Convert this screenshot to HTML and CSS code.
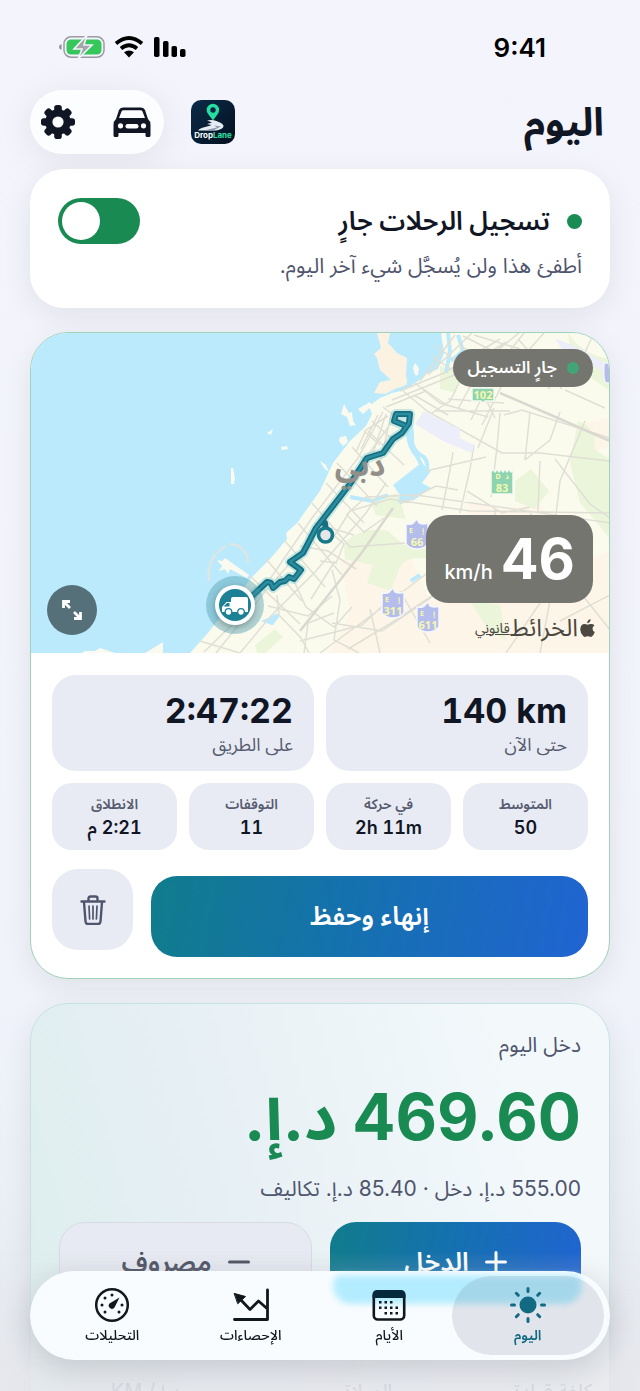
FILE: index.html
```html
<!DOCTYPE html>
<html lang="ar" dir="rtl">
<head>
<meta charset="utf-8">
<meta name="viewport" content="width=device-width, initial-scale=1">
<title>اليوم</title>
<link rel="stylesheet" href="styles.css">
</head>
<body>
<div class="status-bar">
  <span class="clock">9:41</span>
  <span class="indicators">
    <svg width="34" height="22" viewBox="0 0 34 22" aria-hidden="true"><rect x="1" y="1" width="5.500" height="20" rx="1.800"/><rect x="10" y="5" width="5.500" height="16" rx="1.800"/><rect x="18.500" y="10" width="5.500" height="11" rx="1.800"/><rect x="27" y="13" width="5.500" height="8" rx="1.800"/></svg>
    <svg width="30" height="22" viewBox="0 0 30 22" aria-hidden="true"><path d="M2 7.500Q15-3.500 28 7.500M7 12.500q8-6.500 16 0" fill="none" stroke="#000" stroke-width="3.800"/><path d="M10 16.200q5-3.600 10 0L15 21.500z"/></svg>
    <svg width="46" height="24" viewBox="0 0 46 24" aria-hidden="true"><rect x="5" y="1.800" width="40" height="20.400" rx="7" fill="none" stroke="#9b9ca1" stroke-width="1.500"/><path d="M2.500 9v6Q0 14 0 12t2.500-3z" fill="#8c8d92"/><rect x="7.500" y="4.500" width="35" height="15" rx="4.500" fill="#35c759"/><path d="M28 0 15 14h8l-4 10 14-14h-8z" fill="#a5a6aa" stroke="#f2f3fb" stroke-width="1.600"/></svg>
  </span>
</div>

<header class="top">
  <h1>اليوم</h1>
  <div class="tools">
    <svg class="logo" viewBox="0 0 44 44" role="img" aria-label="DropLane">
      <defs><linearGradient id="lg" x1="0" y1="0" x2="1" y2="1"><stop stop-color="#0b2b49"/><stop offset="1" stop-color="#04101f"/></linearGradient></defs>
      <rect width="44" height="44" rx="10" fill="url(#lg)"/>
      <path d="M22 20.500C18 15 15.700 13 15.700 10a6.200 6.200 0 0 1 12.400 0c0 3-2.200 5-6.100 10.500z" fill="#25dfa0"/>
      <circle cx="22" cy="10" r="2.700" fill="#0a2340"/>
      <path d="M16 20.500c6-1.500 10 .5 14 2.500 5 3 2 6.500-5 7.500H7c3-3.500 9-3.500 13.500-5.500L16 24l5-1.500z" fill="#e8edf5"/>
      <path d="M13 30.500l13-3-3-2 7 1-8 4z" fill="#8998ad"/>
      <text x="22" y="37.500" text-anchor="middle" direction="ltr" class="logo-text"><tspan fill="#fff">Drop</tspan><tspan fill="#2be0a3">Lane</tspan></text>
    </svg>
    <div class="tool-pill">
      <button type="button" aria-label="المركبة"><svg width="38" height="30" viewBox="0 0 38 30" aria-hidden="true"><path d="M3 12 6 3Q7 .5 10 .5h18q3 0 4 2.500l3 9q2.500 2 2.500 6v10.500q0 1.500-1.500 1.500H34q-1.500 0-1.500-1.500V26h-27v2.500Q5.500 30 4 30H2Q.5 30 .5 28.500V18q0-4 2.500-6z" fill="#111625"/><path d="m6 11 2.500-6.500q.5-1.300 2-1.300h17q1.500 0 2 1.300L32 11z" fill="#fbfdff"/><rect x="12.500" y="17" width="13" height="4.400" rx="2.200" fill="#fbfdff"/><circle cx="7.500" cy="18.800" r="2.600" fill="#fbfdff"/><circle cx="30.500" cy="18.800" r="2.600" fill="#fbfdff"/></svg></button>
      <button type="button" aria-label="الإعدادات"><svg width="36" height="36" viewBox="-18 -18 36 36" aria-hidden="true"><g fill="#111625"><g id="teeth"><rect x="-3.800" y="-17" width="7.600" height="34" rx="2.800"/><rect x="-17" y="-3.800" width="34" height="7.600" rx="2.800"/></g><use href="#teeth" transform="rotate(45)"/><circle r="12.800"/></g><circle r="5.600" fill="#fbfdff"/></svg></button>
    </div>
  </div>
</header>

<main>
  <section class="card record">
    <div class="record-row">
      <i class="dot"></i>
      <label for="rec">تسجيل الرحلات جارٍ</label>
      <input id="rec" class="switch" type="checkbox" role="switch" checked>
    </div>
    <p>أطفئ هذا ولن يُسجَّل شيء آخر اليوم.</p>
  </section>

  <section class="card trip">
    <div class="map">
      <svg class="map-art" viewBox="30 332 580 320" preserveAspectRatio="xMidYMid slice" role="img" aria-label="خريطة دبي">
        <rect x="30" y="332" width="580" height="320" fill="#bbeafc"/>
        <path d="M190 652 207 633 225 610 253 575 270 558 287 538 286 532 297 522 320 490 333 462 350 440 366 425 372 413 369 405 380 397 392 392 405 389 418 380 426 373 438 368 444 352 441 332H610V652z" fill="#fbfbed"/>
        <path d="M580 424l30-8v30l-20 6zM470 500l30 8 40-6 20 30-60 20-36-20zM340 560l40-20 30 15 20 45 60-10 120-40v102H330l20-40z" fill="#fdf5e8"/>
        <path d="M344 542q20-18 44-12l16 14 25-8-2 22q-22-4-28 10l-8 22-24-8 6-18-28-6zM568 332q14 22 42 26v32l-26-18-12-14zM578 420q20 8 16 28l16 10v80l-16-20-14-16-10-40zM515 480l16-12 18 22-14 18-20-8zM440 365l20 5-4 22-16-4zM370 500l28-8 8 26-30-4zM470 600l30 4 6 36-20-14zM255 644l20-16 8 8-18 16h-8z" fill="#eaf5d9"/>
        <path d="M377 332h13l-2 10 9 10 10 5-1 18 2 8-9 4-10-10-9-8-3-12-3-4 7-6zM374 392l6-11 15-3 4 8-14 7z" fill="#fcf2e2"/>
        <path d="M344 403l5 9 3-1 1 9 3 4-6 1-3-9-6-3zM340 436l6-1 2 6-5 4-4-5zM358 408l12-7 2 4-9 8zM415 362l4 5-1 6 4 3-7-2-2-7zM320 460l6 4 3 7-5-4zM231 467h2l2 10-1 6h-3zM267 432l6-4-2 6zM281 446l6-1 1 3-6 1zM217 559l5 1 3-3 24 17-2 3-17-9-2 5-3-5-6 2 3-5zM145 652l10-6 8-5v11zM82 652l3-2 10 0 5-3 15 5z" fill="#fbfaf0"/>
        <path d="M209 580Q206 556 226 545M230 543Q248 545 248 562" fill="none" stroke="#dfe5e2" stroke-width="2.500" stroke-dasharray="14 1"/>
        <path d="M440 332q-9 28-16 38t-17 12M448 332l2 18-4 22M458 334l5 16-12 10M408 420q5 5 4 22 3 10 12 14 6 8 1 17l-8 10-16 8q-5-8 9-8l12-18-5-10q-8-8-9-22zM350 496l22 4 16-6M266 620l12-6-6 8zM411 580l9-6" fill="none" stroke="#bbeafc" stroke-width="4"/>
        <path d="M393 484l28-22 10 8-9 12 9 5-17 12-16 3 2-8z" fill="#bbeafc"/>
        <g fill="none" stroke="#e0dfd6" stroke-width="1.500">
          <path d="M204 651l40-39 28-37 40-58 46-60 25-46M216 652l48-60 40-46 48-70 42-58M240 652l30-36 46-46 50-58 20-30M200 640l40 12M250 575l50 48M266 558l36 42M285 540l40 46M298 522l44 52M312 502l38 44M326 482l38 40M337 462l40 43M352 446l36 40M368 430l36 34"/>
          <path d="M356 451l10-22 22-14M364 430l16 14M372 420l20 18M383 406l22 17M378 414l-17 34M386 413l-14 42M392 410l-12 52M300 545l28 5 28 18M314 522l40 12M268 605l40 10 24-20M277 594l2 20 22 23 8 15M294 580l12 26 28 20 18-20M304 652l4-30 26-10M332 569l8 30-6 40 25 13M320 560l16 2 8-19-13-11M335 560l-24 38"/>
          <path d="M346 514l20-18 50-2 194 28M330 542l20-32 40-12 80 12 140 2M348 515l16 16 20-14M350 546l55-4M320 652l60-44 50-38 34-22M332 622l50 8 50-34M370 608l10 44M400 590l30 52M300 640l62-16 30-28M348 648l40-24 90-60M442 509l8-40 3-18M460 512l10-44 4-24M495 508v28M467 490l35 22 28-6M426 470l60-14M400 503l36-18 22 4"/>
          <path d="M403 390l24 20 50 28 25 14 38 0 70 8M415 382l25 20 48 14M400 390l44-18 56-34M392 399l60-24 54-34M386 406l40-16M420 380l35-46M428 374l44-42M452 366l27 18 16 33M470 360l-20 40-18 12M458 408l26-48 35-28M471 419l25-52 28-35M482 424l26-52 36-40M494 407l-16 40M500 412l-3 34-6 50M530 411l-5 48M560 411l-10 28-25 20M585 420l-25 60-4 34M565 389l40 18M570 384l22-48M540 460l-2 50M504 414l18-5 88 28M555 458l35 45 20 14M530 512l15 23 30 50 40 50M540 602l-34 50M550 600l-10 52M560 620l50-26M434 410l76 0M448 398l56 4"/>
          <path d="M460 345l40 22M463 335l44 22M474 334l46 14M432 355l26 18M435 344l34 26M510 348l40 40M518 338l44 50M414 394l34 20M422 387l26 18"/>
        </g>
        <path d="M415 423 424 410 460 428 460 437 474 444 472 452 445 441zM555 337l24 10 30 18v8l-32-16-16-10z" fill="#eceef9"/>
        <path d="M500 392 560 418 610 440M300 630l63-80 30-43" fill="none" stroke="#dad8d0" stroke-width="2.500"/>
        <g fill="none" stroke-linejoin="round" stroke-linecap="round">
          <path d="M250 597 267 581 271 582 273 587 280 581 285 580 289 576 294 578 301 569 290 561 303 552 316 527 323 518 350 483 367 457 383 452 393 438 402 432 409 422 410 413 396 413 394 420 404 424" stroke="#78c7cf" stroke-opacity=".4" stroke-width="10"/>
          <path d="M250 597 267 581 271 582 273 587 280 581 285 580 289 576 294 578 301 569 290 561 303 552 316 527 323 518 350 483 367 457 383 452 393 438 402 432 409 422 410 413 396 413 394 420 404 424M321 521l4 1 1 8" stroke="#156f80" stroke-width="6"/>
          <path d="M250 597 267 581 271 582 273 587 280 581 285 580 289 576 294 578 301 569 290 561 303 552 316 527 323 518 350 483 367 457 383 452 393 438 402 432 409 422 410 413 396 413 394 420 404 424" stroke="#2a8da0" stroke-width="2.500"/>
        </g>
        <circle cx="325.500" cy="534" r="7" fill="#e6e5e8" stroke="#15798b" stroke-width="3.600"/>
        <text x="360" y="475" class="city">دبي</text>
        <g fill="#8fd4b1" stroke="#f4faef" stroke-width="1.500"><path d="M472 387h22v13h-9l-2 2-2-2h-9z"/><path d="M491 471l2-3 2 3 2-3 2 3 2-3 2 3 2-3 2 3 2-3 2 3 2-3v25h-22z"/></g>
        <g fill="#b4bdeb" stroke="#f5f6fa" stroke-width="1.500"><path id="sh" d="M406 523q6 1 8-2l3-3 2 4q5 2 9 0v21q-4 5-11 5t-11-5z"/><use href="#sh" x="-24" y="69"/><use href="#sh" x="11" y="83"/><path d="M604 362h10v20h-8q-3-1-2-20z"/></g>
        <g fill="#f7f8ae" class="road-no"><text x="483" y="398">102</text><text x="502" y="491">83</text><text x="417" y="545">66</text><text x="393" y="614">311</text><text x="428" y="628">611</text><g class="tiny-no"><text x="498" y="478">D</text><text x="507" y="478">د</text><text x="411" y="532">E</text><text x="423" y="532">إ</text><text x="387" y="601">E</text><text x="399" y="601">إ</text><text x="422" y="615">E</text><text x="434" y="615">إ</text></g></g>
        <circle cx="235" cy="604" r="29" fill="#4698ab" fill-opacity=".4"/>
        <circle cx="235" cy="604" r="20" fill="#fff" class="pin"/>
        <circle cx="235" cy="604" r="16" fill="#1c8194"/>
        <path d="M233 596h13q2 0 2 2v13h-26v-5l4.500-5h4.500v-3q0-2 2-2z" fill="#fff"/>
        <path d="M223.500 605.500l3.500-3.500h2.500v3.500z" fill="#1c8194"/>
        <g fill="#fff" stroke="#1c8194" stroke-width="1.300"><circle cx="228.500" cy="611" r="3.300"/><circle cx="241" cy="611" r="3.300"/></g>
      </svg>
      <div class="live"><i class="dot"></i>جارٍ التسجيل</div>
      <button class="expand" type="button" aria-label="تكبير الخريطة"><svg width="22" height="22" viewBox="0 0 22 22" fill="none" stroke="#fff" stroke-width="2.800" aria-hidden="true"><path d="M2.500 9V2.500H9M2.500 2.500l6.500 6.500M19.500 13v6.500H13M19.500 19.500 13 13"/></svg></button>
      <div class="map-foot">
        <div class="speed"><strong>46</strong><span>km/h</span></div>
        <div class="legal"><svg width="15" height="18" viewBox="0 0 15 18" aria-hidden="true"><path d="M10.500 0q.3 3.700-3.300 4.300Q7 1.200 10.500 0zM14.500 6.300q-2 1.200-2 3.300 0 2.500 2.300 3.500-1 3-3 4.500-1 .6-2.300 0-1.700-.7-3.500 0-1.500.7-2.600-.3Q0 14 .3 9.700.8 5.200 4.500 5q1.500 0 3.100.8Q9 5 11 5q2.300.1 3.500 1.300z" fill="#4a4840"/></svg><span>الخرائط</span><a href="#legal">قانوني</a></div>
      </div>
    </div>
    <div class="trip-body">
      <div class="tiles two">
        <div class="tile big"><strong dir="ltr">140 km</strong><span>حتى الآن</span></div>
        <div class="tile big"><strong dir="ltr">2:47:22</strong><span>على الطريق</span></div>
      </div>
      <div class="tiles four">
        <div class="tile small"><span>المتوسط</span><strong>50</strong></div>
        <div class="tile small"><span>في حركة</span><strong dir="ltr">2h 11m</strong></div>
        <div class="tile small"><span>التوقفات</span><strong>11</strong></div>
        <div class="tile small"><span>الانطلاق</span><strong>2:21 م</strong></div>
      </div>
      <div class="trip-actions">
        <button class="btn finish" type="button">إنهاء وحفظ</button>
        <button class="trash" type="button" aria-label="حذف"><svg width="26" height="30" viewBox="0 0 26 30" fill="none" stroke="#4f556d" stroke-width="2.400" stroke-linecap="round" stroke-linejoin="round" aria-hidden="true"><path d="M1.500 6.500h23M4 7l1.500 19.500q.2 2.500 2.500 2.500h10q2.300 0 2.500-2.500L22 7M8.500 6V3.500Q8.500 1.500 10.500 1.500h5q2 0 2 2V6"/><path d="M9 11l.6 13M13 11v13M17 11l-.6 13" stroke-width="1.700"/></svg></button>
      </div>
    </div>
  </section>

  <section class="card income">
    <h2>دخل اليوم</h2>
    <p class="amount">469.60 د.إ.</p>
    <p class="split">555.00 د.إ. دخل · 85.40 د.إ. تكاليف</p>
    <div class="income-actions">
      <button class="btn add" type="button"><svg width="22" height="22" viewBox="0 0 22 22" stroke="#fff" stroke-width="3" stroke-linecap="round" aria-hidden="true"><path d="M1.500 11h19M11 1.500v19"/></svg>الدخل</button>
      <button class="btn spend" type="button"><svg width="22" height="22" viewBox="0 0 22 22" stroke="#4a4e5e" stroke-width="3" stroke-linecap="round" aria-hidden="true"><path d="M1.500 11h19"/></svg>مصروف</button>
    </div>
    <div class="totals"><span>كلفة قيادة</span><span>الصلاة</span><span>د.إ / KM</span></div>
  </section>
</main>

<div class="fade"></div>
<nav class="tabs">
  <a class="tab active" href="#today"><svg width="36" height="36" viewBox="-18 -18 36 36" stroke="#0b6e87" stroke-width="3" stroke-linecap="round" aria-hidden="true"><circle r="8.500" fill="#0b6e87" stroke="none"/><path d="M0-16.500v3M0 13.500v3M-16.500 0h3M13.500 0h3M-11.700-11.700l2 2M9.700 9.700l2 2M-11.700 11.700l2-2M9.700-9.700l2-2"/></svg>اليوم</a>
  <a class="tab" href="#days"><svg width="36" height="36" viewBox="-18 -18 36 36" aria-hidden="true"><rect x="-15.200" y="-13.500" width="30.400" height="28" rx="4" fill="none" stroke="#10171d" stroke-width="2.600"/><path d="M-16.500-7v-3q0-5 5-5h23q5 0 5 5v3z" fill="#05283c"/><g fill="#10171d"><path d="M-10-4h2.500v2.500H-10zM-4.500-4H-2v2.500h-2.500zM1-4h2.500v2.500H1zM-10 1.500h2.500V4H-10zM-4.500 1.500H-2V4h-2.500zM1 1.500h2.500V4H1zM6.500 1.500H9V4H6.500zM-4.500 7H-2v2.500h-2.500zM1 7h2.500v2.500H1zM6.500 7H9v2.500H6.500z"/></g></svg>الأيام</a>
  <a class="tab" href="#stats"><svg width="36" height="36" viewBox="-18 -18 36 36" fill="none" stroke="#10171d" stroke-width="2.800" stroke-linecap="round" stroke-linejoin="round" aria-hidden="true"><path d="M16.500-15v29.500H-16.500M16 3.500 7.500-4-1 4.500-11-6"/><path d="M-16.500-11.500-5.500-8.500-13-1.500z" fill="#10171d" stroke-width="1"/></svg>الإحصاءات</a>
  <a class="tab" href="#analysis"><svg width="36" height="36" viewBox="-18 -18 36 36" aria-hidden="true"><circle r="15.800" fill="none" stroke="#10171d" stroke-width="2.500"/><path d="M7.500-7.500 2.500 2.500A3.200 3.200 0 1 1-2.500-1.500z" fill="#10171d"/><g fill="#10171d"><circle cx="0" cy="-10" r="1.500"/><circle cx="-7" cy="-7" r="1.500"/><circle cx="-10" cy="0" r="1.500"/><circle cx="10" cy="0" r="1.500"/><circle cx="-7" cy="7" r="1.500"/><circle cx="7" cy="7" r="1.500"/></g></svg>التحليلات</a>
</nav>
</body>
</html>
```
FILE: styles.css
```css
* { box-sizing: border-box; }
html, body { height: 100%; }
body {
  margin: 0;
  overflow: hidden;
  background: linear-gradient(#f3f4fc, #f1f3fb 70%, #eaf0f6 85%, #e4e8ee);
  color: #111625;
  font-family: Inter, "Noto Sans Arabic", "DejaVu Sans", sans-serif;
  font-size: 21px;
}
h1, h2, p { margin: 0; }
button { border: 0; padding: 0; font: inherit; color: inherit; background: none; }
svg { display: block; flex: none; }

.status-bar {
  display: flex;
  align-items: center;
  justify-content: space-between;
  height: 90px;
  padding: 4px 94px 0 59px;
}
.clock { font-size: 26px; font-weight: 600; color: #000; }
.indicators { display: flex; align-items: center; gap: 9px; }

.top {
  display: flex;
  align-items: center;
  justify-content: space-between;
  height: 64px;
  padding: 0 36px 0 30px;
}
.top h1 { font-size: 39px; line-height: 60px; font-weight: 700; }
.tools { display: flex; align-items: center; gap: 27px; }
.logo { width: 44px; height: 44px; }
.logo-text { font-size: 8px; font-weight: 700; }
.tool-pill {
  display: flex;
  align-items: center;
  justify-content: space-between;
  width: 134px;
  height: 64px;
  padding: 0 13px 0 10px;
  border-radius: 32px;
  background: #fbfdff;
  box-shadow: 0 6px 36px rgba(20, 20, 20, .08);
}

main { padding: 15px 30px 0; display: grid; gap: 24px; }
.card {
  border-radius: 38px;
  background: #fff;
  box-shadow: 0 8px 30px rgba(20, 22, 28, .08);
}
.dot { width: 15px; height: 15px; border-radius: 50%; background: #1a8c53; flex: none; }

.record { padding: 29px 28px 27px; border-radius: 34px; }
.record-row { display: flex; align-items: center; gap: 17px; height: 46px; }
.record-row label { flex: 1; font-size: 26px; line-height: 40px; font-weight: 600; }
.record p { margin-top: 6px; line-height: 31px; color: #4f556d; }
.switch {
  appearance: none;
  width: 82px;
  height: 46px;
  margin: 0;
  padding: 4px;
  border-radius: 23px;
  background: #198a52;
}
.switch::before {
  content: "";
  display: block;
  width: 38px;
  height: 38px;
  margin-right: auto;
  border-radius: 50%;
  background: #fff;
}

.trip { overflow: hidden; border: 1px solid #9fd2b9; }
.map { position: relative; height: 320px; }
.map-art { width: 100%; height: 100%; }
.city { font-size: 31px; font-weight: 700; fill: #928f8a; text-anchor: middle; }
.road-no { font-family: "Open Sans", "Noto Sans Arabic", sans-serif; font-size: 11px; font-weight: 700; text-anchor: middle; }
.tiny-no { font-size: 7px; }
.pin { filter: drop-shadow(0 2px 3px rgba(0, 0, 0, .3)); }
.live {
  position: absolute;
  top: 16px;
  right: 16px;
  display: flex;
  align-items: center;
  gap: 10px;
  height: 38px;
  padding: 0 14px;
  border-radius: 19px;
  background: #757570;
  color: #fff;
  font-size: 17px;
  font-weight: 600;
}
.live .dot { width: 12px; height: 12px; background: #41a577; }
.expand {
  position: absolute;
  left: 16px;
  bottom: 18px;
  display: grid;
  place-items: center;
  width: 50px;
  height: 50px;
  border-radius: 50%;
  background: #56707a;
}
.map-foot { position: absolute; right: 16px; bottom: 10px; display: grid; justify-items: start; gap: 10px; }
.speed {
  display: flex;
  align-items: baseline;
  gap: 8px;
  height: 88px;
  padding: 0 18px;
  border-radius: 22px;
  background: #757570;
  color: #fff;
  line-height: 88px;
}
.speed strong { font-size: 56px; font-weight: 700; }
.speed span { font-size: 20px; font-weight: 500; }
.legal { display: flex; align-items: center; height: 30px; color: #4a4840; font-size: 24px; margin-right: -2px; }
.legal span { margin-right: 2px; }
.legal a { color: inherit; font-size: 14px; }

.trip-body { display: grid; gap: 12px; padding: 22px 21px 21px; }
.tiles { display: grid; gap: 12px; }
.two { grid-template-columns: repeat(2, 1fr); }
.four { grid-template-columns: repeat(4, 1fr); }
.tile { display: grid; background: #e9ebf4; font-variant-numeric: tabular-nums; }
.big { height: 96px; padding: 16px 21px 12px; border-radius: 24px; }
.big strong { font-size: 34px; line-height: 40px; font-weight: 700; text-align: right; }
.big span { font-size: 18px; line-height: 28px; color: #565c70; }
.small { height: 67px; padding: 10px 4px 9px; border-radius: 20px; justify-items: center; }
.small span { font-size: 14px; line-height: 22px; font-weight: 600; color: #565c70; }
.small strong { font-size: 18px; line-height: 26px; font-weight: 600; }
.trip-actions { display: flex; align-items: baseline; gap: 18px; padding-top: 7px; }
.btn {
  display: flex;
  align-items: center;
  justify-content: center;
  gap: 16px;
  flex: 1;
  height: 81px;
  border-radius: 26px;
  font-size: 26px;
  font-weight: 600;
}
.finish, .add { color: #fff; background: linear-gradient(100deg, #107c8c, #1571ae 45%, #2064d2); }
.trash { display: grid; place-items: center; width: 81px; height: 81px; border-radius: 26px; background: #e9ebf4; }

.income {
  padding: 25px 28px;
  border: 1px solid #c5e2e2;
  background: linear-gradient(75deg, #dceeed, #e6eff4 35%, #f3f9fb 85%);
}
.income h2 { font-size: 21px; line-height: 32px; font-weight: 400; color: #4f556d; }
.amount { margin-top: 12px; font-size: 64px; line-height: 88px; font-weight: 700; color: #198a52; }
.split { margin-top: 12px; line-height: 32px; color: #4f556d; }
.income-actions { display: flex; gap: 18px; margin-top: 17px; }
.spend { color: #4a4e5e; border: 1px solid #d7dce2; background: #e7eaf2; }
.totals {
  display: grid;
  grid-template-columns: 200fr 212fr 150fr;
  margin: 72px -11px 0 -28px;
  font-size: 20px;
  line-height: 32px;
  color: #999ea8;
}

.fade {
  position: fixed;
  left: 0;
  right: 0;
  bottom: 0;
  height: 140px;
  background: linear-gradient(rgba(228, 230, 234, 0), rgba(230, 231, 236, .8) 85%);
}
.tabs {
  position: fixed;
  left: 30px;
  right: 30px;
  bottom: 31px;
  display: grid;
  grid-template-columns: repeat(4, 1fr);
  height: 89px;
  padding: 5px 13px;
  border-radius: 45px;
  background: #f9fcff;
  box-shadow: 0 8px 28px 2px rgba(20, 30, 45, .14);
}
.tabs::before {
  content: "";
  position: absolute;
  top: 4px;
  right: 28px;
  width: 43%;
  height: 29px;
  border-radius: 8px 8px 18px 18px;
  background: #b4ecff;
  filter: blur(3px);
}
.tab {
  position: relative;
  display: flex;
  flex-direction: column;
  align-items: center;
  gap: 1px;
  padding-top: 11px;
  color: #10171d;
  font-size: 14px;
  line-height: 22px;
  font-weight: 500;
  text-decoration: none;
}
.active { color: #0b6e87; font-weight: 600; }
.active::before {
  content: "";
  position: absolute;
  inset: 0 -7px;
  border-radius: 40px;
  background: rgba(70, 80, 100, .13);
}
```
